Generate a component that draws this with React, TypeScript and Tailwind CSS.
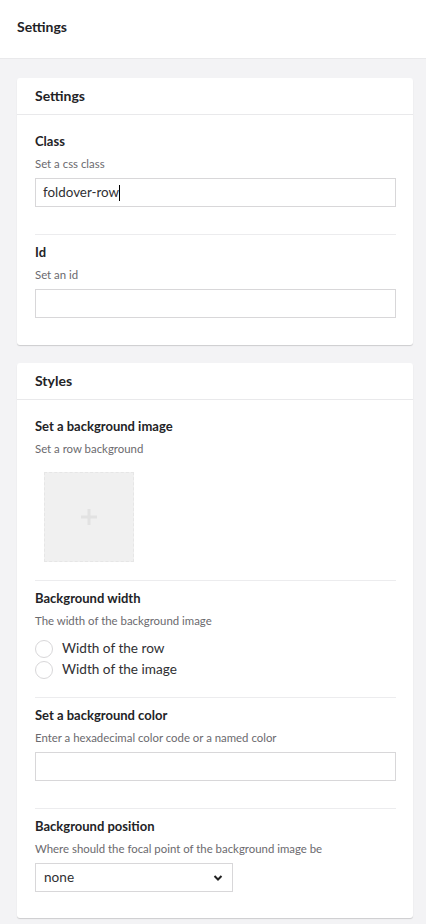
import React from "react";

const font = { fontFamily: "Lato, 'Open Sans', sans-serif" };

function Label({ children }: { children: React.ReactNode }) {
  return <div className="text-[13px] leading-[20px] font-bold text-[#232326]">{children}</div>;
}
function Desc({ children }: { children: React.ReactNode }) {
  return <div className="mt-[5px] text-[11.4px] leading-[16px] text-[#6b6a6e]">{children}</div>;
}
function Divider() {
  return <div className="h-px bg-[#ececee]" />;
}
function TextBox({ children }: { children?: React.ReactNode }) {
  return (
    <div className="mt-[6px] h-[29px] w-full border border-[#d8d7d9] bg-white px-[7px] flex items-center text-[13.4px] text-[#303033]">
      {children}
    </div>
  );
}
function Radio({ label }: { label: string }) {
  return (
    <div className="h-[21px] flex items-center">
      <div className="w-[18px] h-[18px] rounded-full border border-[#d8d7d9] bg-white" />
      <span className="ml-[9px] text-[13.6px] text-[#303033]">{label}</span>
    </div>
  );
}
function CardHeader({ title }: { title: string }) {
  return (
    <div className="h-[37px] px-[18px] flex items-center border-b border-[#e9e9eb] pb-[2px]">
      <span className="text-[14px] font-bold text-[#232326]">{title}</span>
    </div>
  );
}

export default function App() {
  return (
    <div style={font} className="w-[426px] min-h-[924px] bg-[#f3f3f5]">
      <div className="h-[59px] bg-white border-b border-[#e9e9eb] px-[17px] flex items-center pb-[5px]">
        <span className="text-[14px] font-bold text-[#232326]">Settings</span>
      </div>
      <div className="pl-[17px] pr-[13px] pt-[19px] flex flex-col gap-[18px]">
        <div className="bg-white rounded-[3px] shadow-[0_1px_1px_rgba(0,0,0,0.16)]">
          <CardHeader title="Settings" />
          <div className="pl-[18px] pr-[17px] pt-[16px] pb-[27px]">
            <Label>Class</Label>
            <Desc>Set a css class</Desc>
            <TextBox>
              <span>foldover-row</span>
              <span className="inline-block w-px h-[16px] bg-black" />
            </TextBox>
            <div className="mt-[27px]">
              <Divider />
            </div>
            <div className="pt-[7px]">
              <Label>Id</Label>
              <Desc>Set an id</Desc>
              <TextBox />
            </div>
          </div>
        </div>

        <div className="bg-white rounded-[3px] shadow-[0_1px_1px_rgba(0,0,0,0.16)]">
          <CardHeader title="Styles" />
          <div className="pl-[18px] pr-[17px] pt-[16px] pb-[26px]">
            <Label>Set a background image</Label>
            <Desc>Set a row background</Desc>
            <div className="mt-[15px] ml-[9px] w-[90px] h-[90px] bg-[#f0f0f0] border border-dashed border-[#e6e6e6] flex items-center justify-center">
              <svg width="18" height="18" viewBox="0 0 18 18">
                <rect x="7.5" y="1" width="3" height="16" fill="#e2e2e2" />
                <rect x="1" y="7.5" width="16" height="3" fill="#e2e2e2" />
              </svg>
            </div>
            <div className="mt-[18px]">
              <Divider />
            </div>
            <div className="pt-[7px]">
              <Label>Background width</Label>
              <Desc>The width of the background image</Desc>
              <div className="mt-[9px] flex flex-col">
                <Radio label="Width of the row" />
                <Radio label="Width of the image" />
              </div>
            </div>
            <div className="mt-[17px]">
              <Divider />
            </div>
            <div className="pt-[7px]">
              <Label>Set a background color</Label>
              <Desc>Enter a hexadecimal color code or a named color</Desc>
              <TextBox />
            </div>
            <div className="mt-[27px]">
              <Divider />
            </div>
            <div className="pt-[7px]">
              <Label>Background position</Label>
              <Desc>Where should the focal point of the background image be</Desc>
              <div className="mt-[6px] w-[198px] h-[29px] border border-[#d8d7d9] bg-white pl-[8px] pr-[9px] flex items-center justify-between">
                <span className="text-[13.6px] text-[#303033]">none</span>
                <svg width="10" height="8" viewBox="0 0 10 8">
                  <path d="M1.5 2 L5 5.5 L8.5 2" fill="none" stroke="#222" strokeWidth="2" />
                </svg>
              </div>
            </div>
          </div>
        </div>
      </div>
    </div>
  );
}
